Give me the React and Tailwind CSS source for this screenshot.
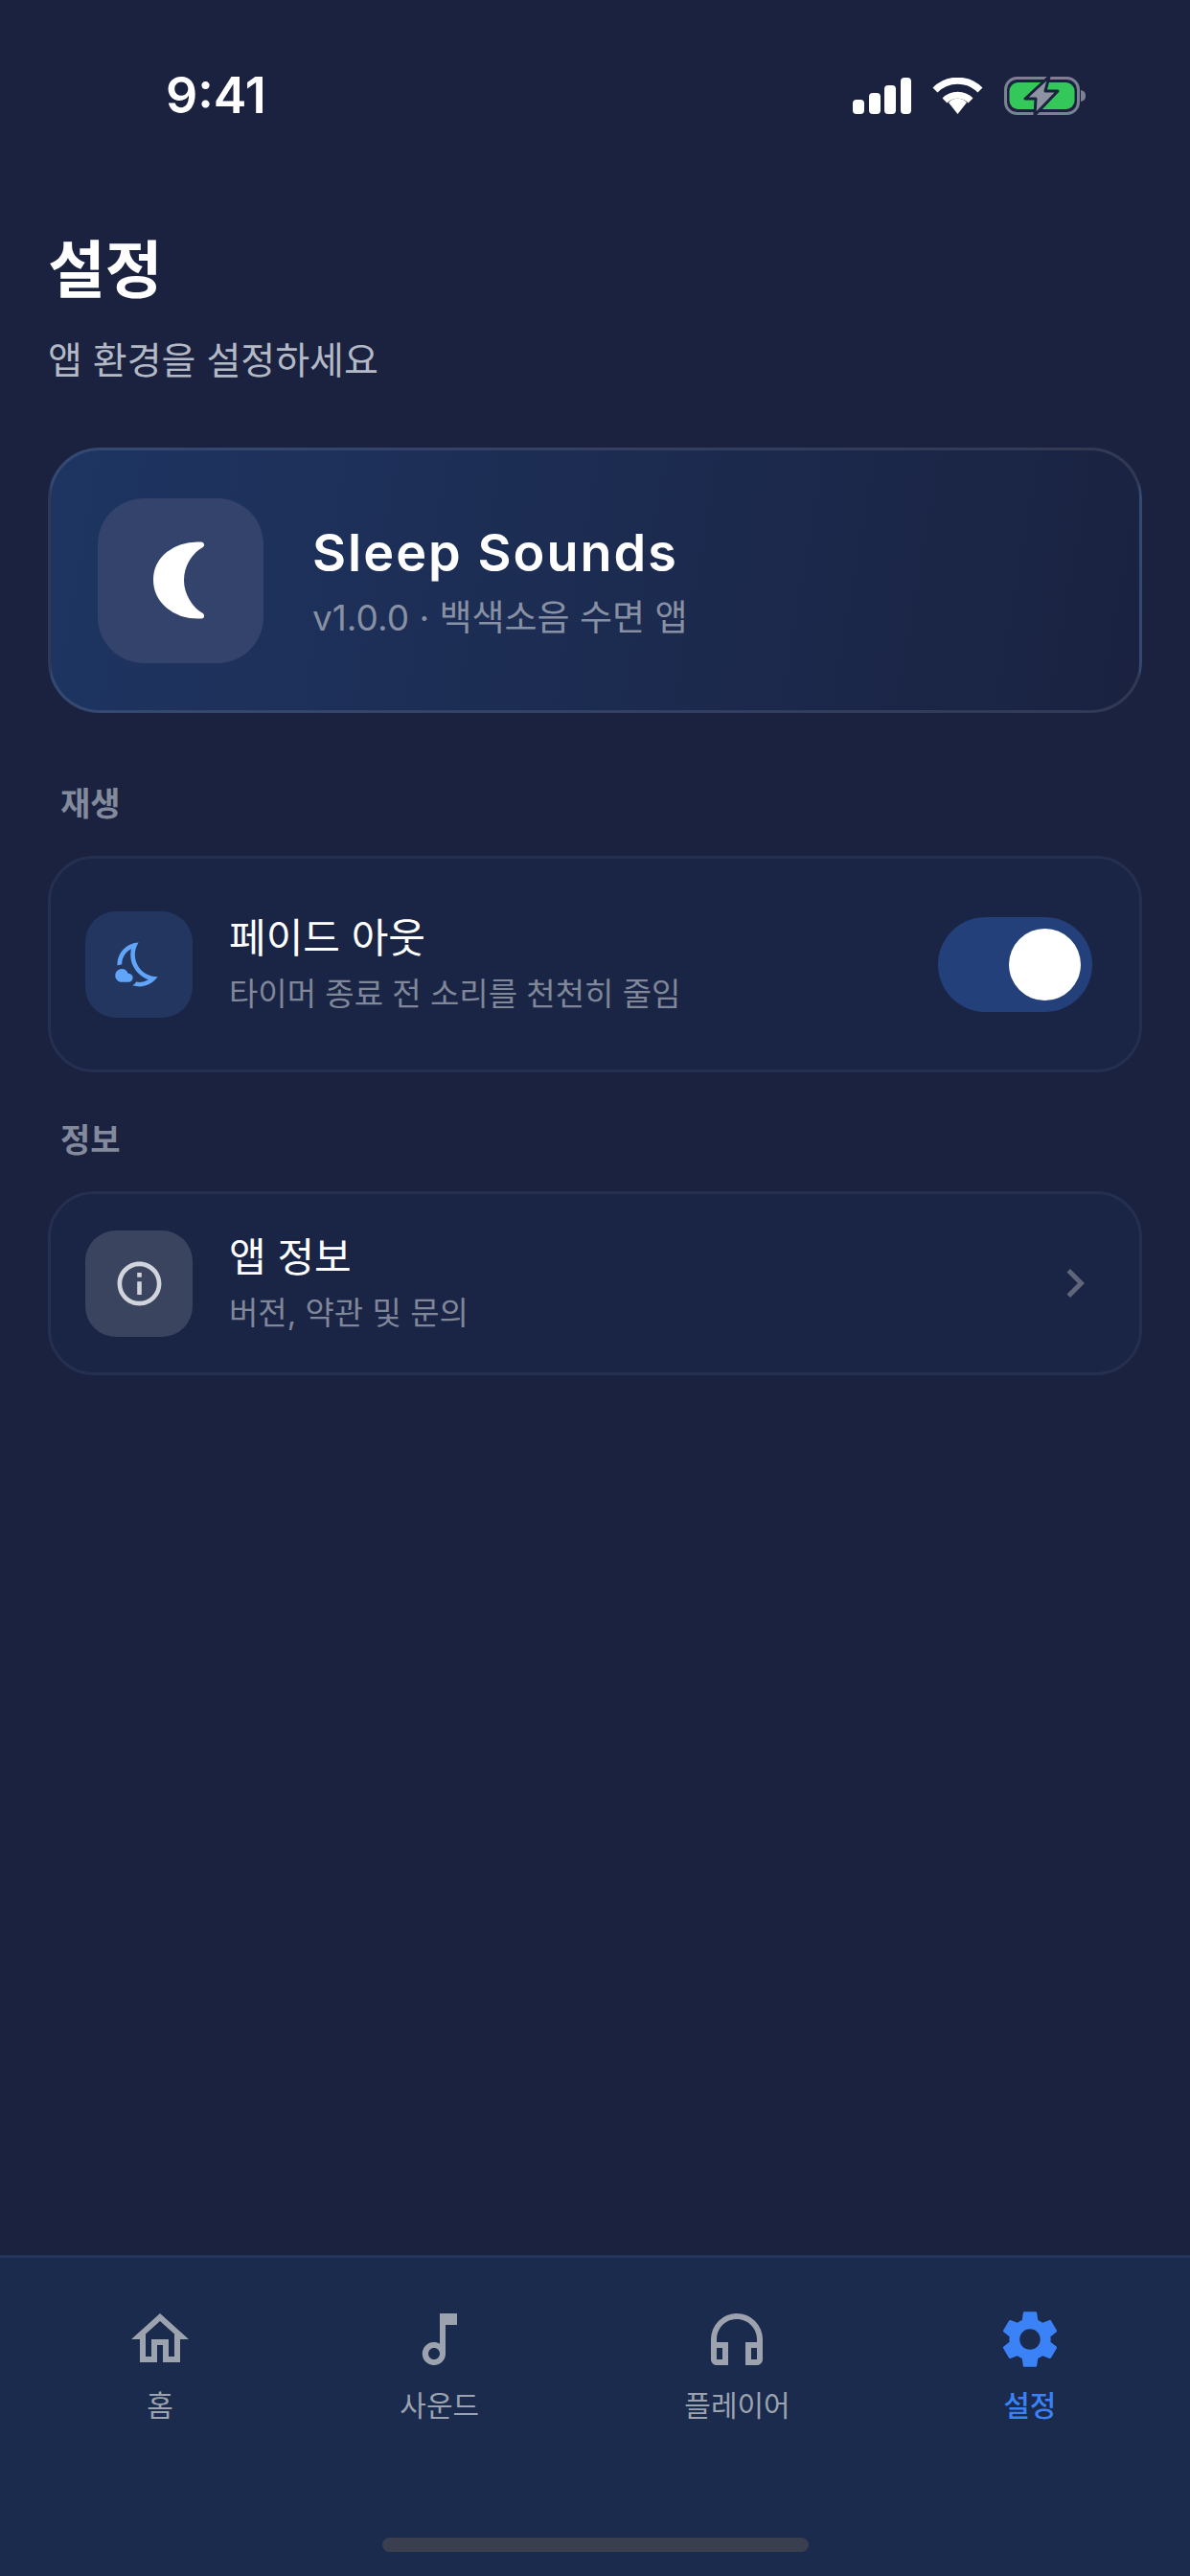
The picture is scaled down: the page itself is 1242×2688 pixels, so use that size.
import React from 'react';
import { MdOutlineHome, MdOutlineMusicNote, MdOutlineHeadphones, MdSettings, MdOutlineInfo, MdChevronRight, MdOutlineNightsStay } from 'react-icons/md';

const StatusBar = () => (
  <div className="flex items-center justify-between pt-[80px] pl-[173px] pr-[109px] h-[120px]">
    <span className="text-[52px] leading-[40px] font-semibold text-white">9:41</span>
    <div className="flex items-center">
      <svg width="61" height="38" viewBox="0 0 61 38" fill="#fff">
        <rect x="0" y="23" width="12" height="15" rx="4" />
        <rect x="17" y="16" width="12" height="22" rx="4" />
        <rect x="33" y="8" width="12" height="30" rx="4" />
        <rect x="50" y="0" width="11" height="38" rx="4" />
      </svg>
      <svg className="ml-[22px]" width="53" height="38" viewBox="0 0 53 38" fill="none" stroke="#fff">
        <path d="M3 13 A33 33 0 0 1 50 13" strokeWidth="7" />
        <path d="M13 24 A19 19 0 0 1 40 24" strokeWidth="7" />
        <path d="M17 26 A13 13 0 0 1 36 26 L26.5 38 Z" fill="#fff" stroke="none" />
      </svg>
      <svg className="ml-[22px]" width="85" height="40" viewBox="0 0 85 40" fill="none">
        <rect x="1.5" y="1.5" width="76" height="37" rx="12" stroke="#7b8092" strokeWidth="3" />
        <rect x="5.5" y="6" width="68" height="28" rx="9" fill="#34c759" />
        <path d="M80 14 C84 15 85 17 85 20 C85 23 84 25 80 26 Z" fill="#7b8092" />
        <path d="M47 0 L22 23 L33 23 L32 40 L56 15 L43 15 Z" fill="#8e93a4" stroke="#1a2240" strokeWidth="3" strokeLinejoin="round" />
      </svg>
    </div>
  </div>
);

const SectionLabel = ({ children, className }) => (
  <div className={`pl-[13px] text-[34px] leading-[40px] font-semibold text-[#828a9c] ${className}`}>{children}</div>
);

const SettingRow = ({ iconBg, icon, title, sub, right, height }) => (
  <div className={`flex items-center rounded-[48px] border-[3px] border-[#252f50] bg-[#1a2444] pl-[36px] pr-[49px] ${height}`}>
    <div className={`flex h-[111px] w-[112px] shrink-0 items-center justify-center rounded-[32px] ${iconBg}`}>{icon}</div>
    <div className="ml-[38px] flex-1">
      <div className="text-[42px] leading-[50px] text-white">{title}</div>
      <div className="mt-[12px] text-[33px] leading-[42px] text-[#7f8799]">{sub}</div>
    </div>
    {right}
  </div>
);

const tabs = [
  { label: '홈', Icon: MdOutlineHome },
  { label: '사운드', Icon: MdOutlineMusicNote },
  { label: '플레이어', Icon: MdOutlineHeadphones },
  { label: '설정', Icon: MdSettings, active: true },
];

const TabBar = () => (
  <div className="mt-auto border-t-[3px] border-[#24365c] bg-[#1a2b4e]">
    <div className="flex justify-around px-[24px] pt-[49px]">
      {tabs.map(({ label, Icon, active }) => (
        <div key={label} className={`flex flex-col items-center ${active ? 'text-[#3b82f6]' : 'text-[#9ca3af]'}`}>
          <Icon size={72} />
          <span className={`mt-[15px] text-[30px] leading-[36px] ${active ? 'font-medium' : ''}`}>{label}</span>
        </div>
      ))}
    </div>
    <div className="mx-auto mt-[120px] mb-[25px] h-[15px] w-[445px] rounded-full bg-[#3a3f4f]" />
  </div>
);

export default function App() {
  return (
    <div className="flex min-h-[2688px] w-[1242px] flex-col bg-[#1a2240] font-['Inter','Noto_Sans_CJK_KR',sans-serif]">
      <StatusBar />

      <div className="px-[50px]">
        <h1 className="mt-[129px] text-[65px] leading-[66px] font-bold text-white">설정</h1>
        <p className="mt-[37px] text-[39px] leading-[48px] text-[#b4b9c6]">앱 환경을 설정하세요</p>

        {/* 앱 카드 */}
        <div className="mt-[67px] flex h-[277px] items-center rounded-[54px] border-[3px] border-[#ffffff1a] bg-[linear-gradient(100deg,#1e3562,#1a2240)] pl-[49px]">
          <div className="flex h-[172px] w-[173px] items-center justify-center rounded-[48px] bg-[#33436c]">
            <svg className="-ml-[4px]" width="54" height="83" viewBox="0 0 54 83" fill="#fff" stroke="#fff" strokeWidth="6" strokeLinejoin="round">
              <path d="M50 4.5 C22 3 3 20 3 41 C3 62 22 80 50 78.5 C38 72 29 56 29 41.5 C29 26 38 11 50 4.5 Z" />
            </svg>
          </div>
          <div className="ml-[51px]">
            <div className="text-[54px] leading-[64px] font-semibold tracking-[2px] text-white">Sleep Sounds</div>
            <div className="mt-[14px] text-[37px] leading-[44px] text-[#8890a3]">v1.0.0 · 백색소음 수면 앱</div>
          </div>
        </div>

        <SectionLabel className="mt-[75px]">재생</SectionLabel>
        <div className="mt-[34px]">
          <SettingRow
            height="h-[226px]"
            iconBg="bg-[#22365f]"
            icon={<MdOutlineNightsStay size={55} className="text-[#60a5fa]" />}
            title="페이드 아웃"
            sub="타이머 종료 전 소리를 천천히 줄임"
            right={
              <div className="flex h-[99px] w-[161px] items-center justify-end rounded-full bg-[#23407a] pr-[12px]">
                <div className="h-[75px] w-[75px] rounded-full bg-white" />
              </div>
            }
          />
        </div>

        <SectionLabel className="mt-[51px]">정보</SectionLabel>
        <div className="mt-[33px]">
          <SettingRow
            height="h-[192px]"
            iconBg="bg-[#3a445f]"
            icon={<MdOutlineInfo size={55} className="text-[#d1d5db]" />}
            title="앱 정보"
            sub="버전, 약관 및 문의"
            right={<MdChevronRight size={60} className="-mr-[12px] text-[#5f6679]" />}
          />
        </div>
      </div>

      <TabBar />
    </div>
  );
}
